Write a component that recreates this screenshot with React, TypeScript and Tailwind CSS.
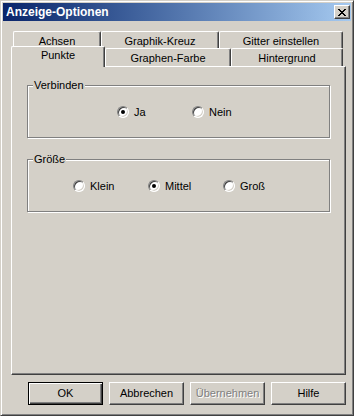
import React from "react";

const font = { fontFamily: '"Liberation Sans", Arial, sans-serif' };

function Radio({ label, checked }: { label: string; checked?: boolean }) {
  return (
    <div className="flex items-center w-[75px] h-[12px]">
      <span className="relative w-[12px] h-[12px] shrink-0 rounded-full bg-white border border-t-[#808080] border-l-[#808080] border-r-white border-b-white shadow-[inset_1px_1px_0_#404040,inset_-1px_-1px_0_#d4d0c8]">
        {checked && (
          <span className="absolute left-[3px] top-[3px] w-[4px] h-[4px] rounded-full bg-black" />
        )}
      </span>
      <span className="ml-[5px] text-[11px] leading-none text-black">{label}</span>
    </div>
  );
}

function Group({ title, pad, children }: { title: string; pad: string; children: React.ReactNode }) {
  return (
    <div className="relative w-[303px] h-[53px] border border-[#808080] shadow-[inset_1px_1px_0_#fff,1px_1px_0_#fff]">
      <span className="absolute -top-[8px] left-[5px] px-[1px] bg-[#d4d0c8] text-[11px] leading-[14px] text-black">
        {title}
      </span>
      <div className={`flex pt-[20px] ${pad}`}>{children}</div>
    </div>
  );
}

function Tab({ label, w, selected }: { label: string; w: string; selected?: boolean }) {
  return (
    <div
      className={`${w} ${
        selected
          ? "relative z-10 -mt-[2px] h-[21px] pt-[2px]"
          : "h-full pt-[3px]"
      } shrink-0 bg-[#d4d0c8] border-t border-l border-r border-t-white border-l-white border-r-[#404040] rounded-t-[2px] shadow-[inset_-1px_0_0_#808080] text-center text-[11px] leading-[12px] text-black`}
    >
      {label}
    </div>
  );
}

function Button({ label, def, disabled }: { label: string; def?: boolean; disabled?: boolean }) {
  return (
    <div
      className={`w-[75px] h-[23px] flex items-center justify-center text-[11px] bg-[#d4d0c8] ${
        def
          ? "border border-black shadow-[inset_1px_1px_0_#fff,inset_-1px_-1px_0_#404040,inset_-2px_-2px_0_#808080]"
          : "border border-t-white border-l-white border-r-[#404040] border-b-[#404040] shadow-[inset_-1px_-1px_0_#808080]"
      } ${disabled ? "text-[#808080] [text-shadow:1px_1px_0_#fff]" : "text-black"}`}
    >
      {label}
    </div>
  );
}

export default function App() {
  return (
    <div
      style={font}
      className="w-[354px] h-[416px] bg-[#d4d0c8] border border-t-[#d4d0c8] border-l-[#d4d0c8] border-r-[#404040] border-b-[#404040] shadow-[inset_1px_1px_0_#fff,inset_-1px_-1px_0_#808080] p-[2px] overflow-hidden"
    >
      {/* title bar */}
      <div className="h-[18px] flex items-center justify-between pl-[3px] pr-[1px] bg-gradient-to-r from-[#0a246a] to-[#a6caf0]">
        <span className="text-white font-bold text-[12px] leading-none">Anzeige-Optionen</span>
        <div className="w-[16px] h-[14px] flex items-center justify-center bg-[#d4d0c8] border border-t-white border-l-white border-r-[#404040] border-b-[#404040] shadow-[inset_-1px_-1px_0_#808080]">
          <svg width="8" height="7" viewBox="0 0 8 7" shapeRendering="crispEdges">
            <path d="M0 0h2v1H0zM6 0h2v1H6zM1 1h2v1H1zM5 1h2v1H5zM2 2h4v1H2zM3 3h2v1H3zM2 4h4v1H2zM1 5h2v1H1zM5 5h2v1H5zM0 6h2v1H0zM6 6h2v1H6z" fill="#000" />
          </svg>
        </div>
      </div>

      {/* tabs */}
      <div className="mt-[10px]">
        <div className="flex h-[17px] pl-[10px]">
          <Tab label="Achsen" w="w-[88px]" />
          <Tab label="Graphik-Kreuz" w="w-[118px]" />
          <Tab label="Gitter einstellen" w="w-[124px]" />
        </div>
        <div className="flex items-start h-[18px] pl-[8px]">
          <Tab label="Punkte" w="w-[94px]" selected />
          <Tab label="Graphen-Farbe" w="w-[126px]" />
          <Tab label="Hintergrund" w="w-[112px]" />
        </div>
        <div className="ml-[8px] w-[335px] h-[309px] border border-t-white border-l-white border-r-[#404040] border-b-[#404040] shadow-[inset_-1px_-1px_0_#808080] pt-[18px] pl-[15px]">
          <Group title="Verbinden" pad="pl-[89px]">
            <Radio label="Ja" checked />
            <Radio label="Nein" />
          </Group>
          <div className="mt-[21px]">
            <Group title="Größe" pad="pl-[45px]">
              <Radio label="Klein" />
              <Radio label="Mittel" checked />
              <Radio label="Groß" />
            </Group>
          </div>
        </div>
      </div>

      {/* buttons */}
      <div className="flex gap-[6px] mt-[7px] pl-[25px]">
        <Button label="OK" def />
        <Button label="Abbrechen" />
        <Button label="Übernehmen" disabled />
        <Button label="Hilfe" />
      </div>
    </div>
  );
}
